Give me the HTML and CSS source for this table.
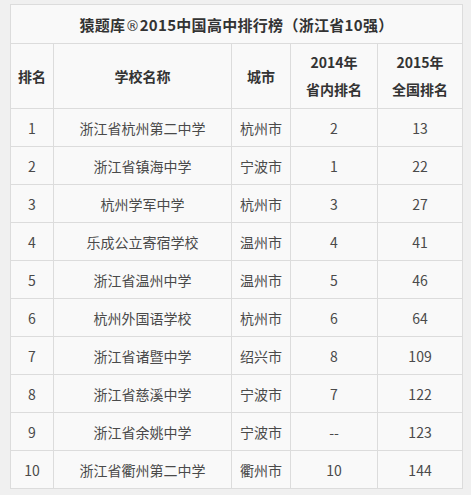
FILE: index.html
```html
<!DOCTYPE html>
<html lang="zh-CN">
<head>
<meta charset="utf-8">
<link rel="stylesheet" href="styles.css">
</head>
<body>
<div class="page">
<table class="rank">
  <colgroup>
    <col class="c1"><col class="c2"><col class="c3"><col class="c4"><col class="c5">
  </colgroup>
  <thead>
    <tr class="title"><th colspan="5">猿题库<span class="reg">®</span>2015中国高中排行榜（浙江省10强）</th></tr>
    <tr class="head">
      <th>排名</th><th>学校名称</th><th>城市</th>
      <th><span class="l">2014年</span><span class="l">省内排名</span></th>
      <th><span class="l">2015年</span><span class="l">全国排名</span></th>
    </tr>
  </thead>
  <tbody>
    <tr><td>1</td><td>浙江省杭州第二中学</td><td>杭州市</td><td>2</td><td>13</td></tr>
    <tr><td>2</td><td>浙江省镇海中学</td><td>宁波市</td><td>1</td><td>22</td></tr>
    <tr><td>3</td><td>杭州学军中学</td><td>杭州市</td><td>3</td><td>27</td></tr>
    <tr><td>4</td><td>乐成公立寄宿学校</td><td>温州市</td><td>4</td><td>41</td></tr>
    <tr><td>5</td><td>浙江省温州中学</td><td>温州市</td><td>5</td><td>46</td></tr>
    <tr><td>6</td><td>杭州外国语学校</td><td>杭州市</td><td>6</td><td>64</td></tr>
    <tr><td>7</td><td>浙江省诸暨中学</td><td>绍兴市</td><td>8</td><td>109</td></tr>
    <tr><td>8</td><td>浙江省慈溪中学</td><td>宁波市</td><td>7</td><td>122</td></tr>
    <tr><td>9</td><td>浙江省余姚中学</td><td>宁波市</td><td>--</td><td>123</td></tr>
    <tr><td>10</td><td>浙江省衢州第二中学</td><td>衢州市</td><td>10</td><td>144</td></tr>
  </tbody>
</table>
</div>
</body>
</html>
```

FILE: styles.css
```css
html, body {
  margin: 0;
  padding: 0;
  background: #f0f0f0;
}
.page {
  padding: 4px 9px 0 10px;
}
.rank {
  width: 452px;
  border-collapse: collapse;
  table-layout: fixed;
  background: #f9f9f9;
  font-family: "Noto Sans CJK SC", "Noto Sans", sans-serif;
  color: #4a4a4a;
  font-size: 14px;
}
.c1 { width: 43px; }
.c2 { width: 178px; }
.c3 { width: 59px; }
.c4 { width: 87px; }
.c5 { width: 85px; }
.rank th, .rank td {
  border: 1px solid #dcdcdc;
  text-align: center;
  vertical-align: middle;
  padding: 0;
}
.rank th {
  font-weight: bold;
  color: #333;
}
.title th {
  height: 38px;
  font-size: 15px;
  letter-spacing: 0.3px;
}
.reg {
  font-family: "DejaVu Sans", sans-serif;
  font-size: 14px;
  font-weight: normal;
}
.head th {
  height: 64px;
}
.head .l {
  display: block;
  line-height: 27px;
}
.rank td {
  height: 37px;
  font-weight: normal;
}
```
